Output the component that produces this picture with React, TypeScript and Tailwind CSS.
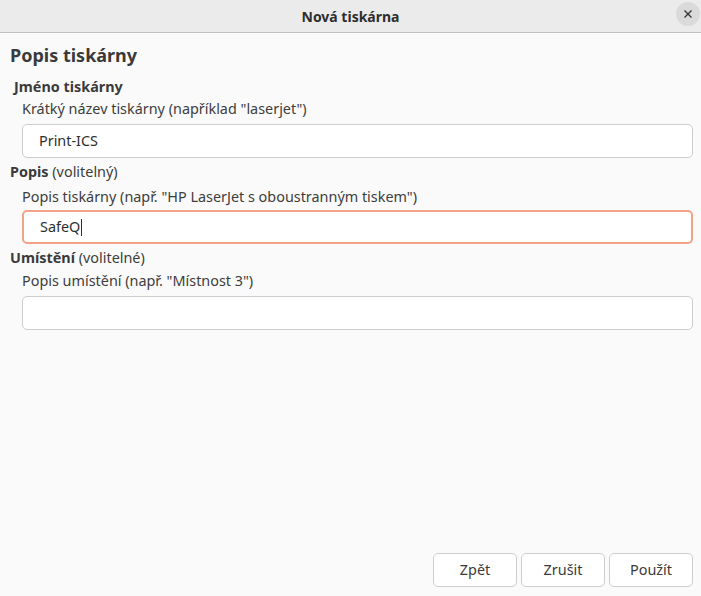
import React from 'react';

const font = { fontFamily: '"Noto Sans", "Open Sans", sans-serif' };

const Field: React.FC<{ value?: string; focused?: boolean }> = ({ value, focused }) => (
  <div
    className={
      'mx-[22px] mr-[8px] h-[34px] rounded-[5px] bg-white flex items-center pl-[16px] text-[14.4px] text-[#2e2e2e] ' +
      (focused ? 'border-2 border-[#f2a386] pl-[15px]' : 'border border-[#cdcdcd]')
    }
  >
    {value}
    {focused && <span className="inline-block w-px h-[17px] bg-[#2e2e2e] ml-px" />}
  </div>
);

export default function App() {
  return (
    <div className="w-[701px] h-[596px] bg-[#fafafa] flex flex-col text-[#3d3d3d]" style={font}>
      {/* Title bar */}
      <div className="h-[33px] bg-[#ebebeb] border-b border-[#bfbfbf] flex items-center justify-center relative">
        <span className="text-[14px] font-bold text-[#2e2e2e]">Nová tiskárna</span>
        <div className="absolute right-[1px] top-[2px] w-[24px] h-[24px] rounded-full bg-[#dadada] flex items-center justify-center">
          <svg width="10" height="10" viewBox="0 0 10 10">
            <path d="M1.5 1.5 L8.5 8.5 M8.5 1.5 L1.5 8.5" stroke="#333" strokeWidth="1.3" />
          </svg>
        </div>
      </div>

      <div className="flex-1 flex flex-col">
        <div className="pl-[10px] pt-[9px] text-[18px] font-bold leading-[26px] text-[#3a3a3a]">Popis tiskárny</div>

        <div className="pl-[14px] mt-[9px] text-[14.4px] font-bold leading-[20px] text-[#3a3a3a]">Jméno tiskárny</div>
        <div className="pl-[22px] mt-[2px] text-[14.4px] leading-[20px]">Krátký název tiskárny (například "laserjet")</div>
        <div className="mt-[5px]">
          <Field value="Print-ICS" />
        </div>

        <div className="pl-[10px] mt-[4px] text-[14.4px] leading-[20px]">
          <span className="font-bold text-[#3a3a3a]">Popis</span> (volitelný)
        </div>
        <div className="pl-[22px] mt-[5px] text-[14.4px] leading-[20px]">Popis tiskárny (např. "HP LaserJet s oboustranným tiskem")</div>
        <div className="mt-[3px]">
          <Field value="SafeQ" focused />
        </div>

        <div className="pl-[10px] mt-[4px] text-[14.4px] leading-[20px]">
          <span className="font-bold text-[#3a3a3a]">Umístění</span> (volitelné)
        </div>
        <div className="pl-[22px] mt-[3px] text-[14.4px] leading-[20px]">Popis umístění (např. "Místnost 3")</div>
        <div className="mt-[5px]">
          <Field />
        </div>

        <div className="flex-1" />

        <div className="flex justify-end gap-[4px] pr-[8px] pb-[9px]">
          {['Zpět', 'Zrušit', 'Použít'].map((b) => (
            <div
              key={b}
              className="w-[84px] h-[34px] rounded-[5px] border border-[#cdcdcd] bg-white flex items-center justify-center text-[14.4px] text-[#3a3a3a]"
            >
              {b}
            </div>
          ))}
        </div>
      </div>
    </div>
  );
}
